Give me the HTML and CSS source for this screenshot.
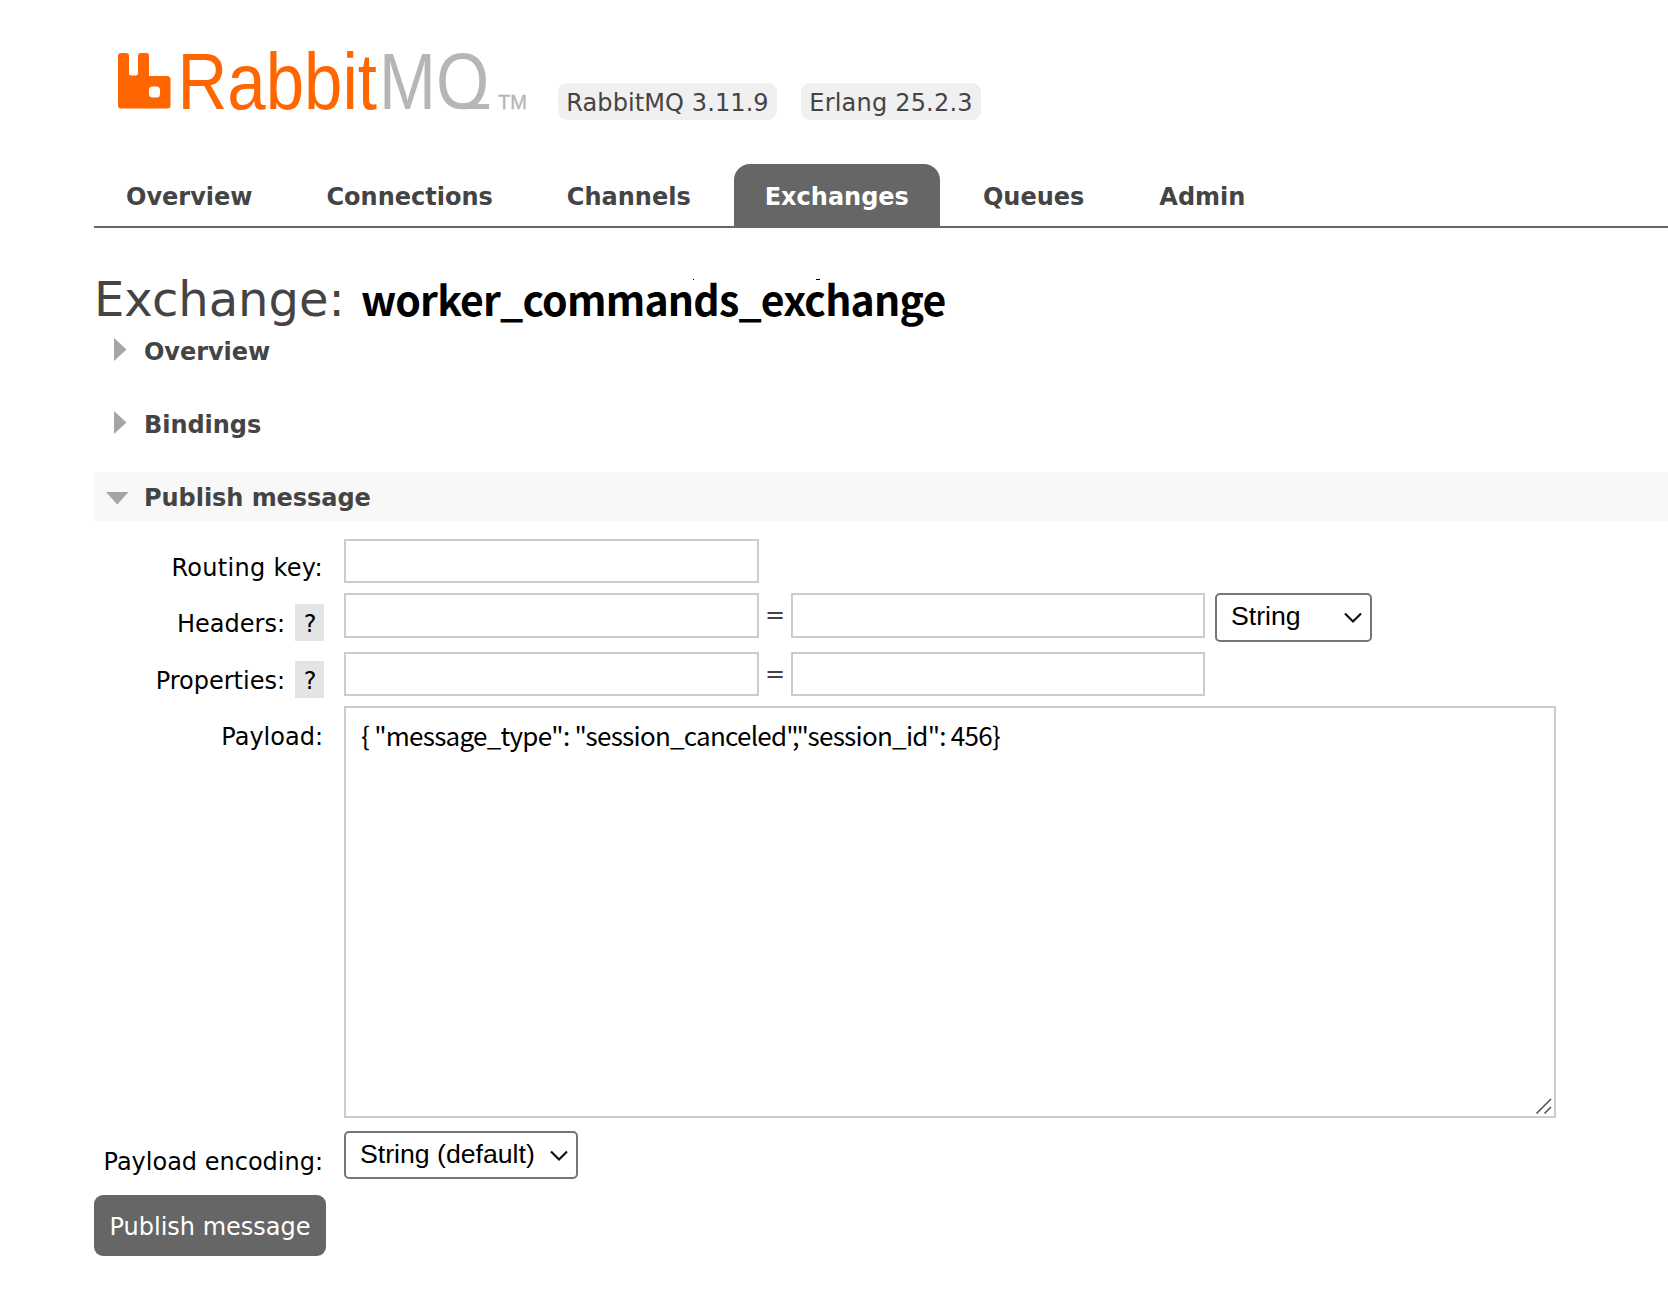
FILE: index.html
```html
<!DOCTYPE html>
<html lang="en">
<head>
<meta charset="utf-8">
<title>RabbitMQ Management</title>
<link rel="stylesheet" href="styles.css">
</head>
<body>
<header class="header">
  <svg class="logo" width="420" height="66" viewBox="0 0 420 66" role="img" aria-label="RabbitMQ">
    <clipPath id="baseline"><path d="M255 0h120v61.300h-120z"/></clipPath>
    <path class="logo-mark" fill-rule="evenodd" d="M4 5h4q3 0 3 3v17q0 2.500 2.500 2.500h4q2.500 0 2.500-2.500V8q0-3 3-3h5q3 0 3 3v20h18q3.500 0 3.500 3.500v26q0 3-3 3H3q-3 0-3-3V8q0-3 3-3zM34.500 38.500q-3.500 0-3.500 3.500v4q0 3.500 3.500 3.500h4q3.500 0 3.500-3.500v-4q0-3.500-3.500-3.500z"/>
    <text class="logo-name" x="59.500" y="60.500" textLength="199.500" lengthAdjust="spacingAndGlyphs">Rabbit</text>
    <g clip-path="url(#baseline)"><text class="logo-name logo-mq" x="261" y="60.500" textLength="110" lengthAdjust="spacingAndGlyphs">MQ</text></g>
    <path class="logo-mq" d="M348 56h23v5h-23z"/>
    <text class="logo-tm" x="380" y="60.500" textLength="29" lengthAdjust="spacingAndGlyphs">TM</text>
  </svg>
  <span class="badge badge-server">RabbitMQ 3.11.9</span>
  <span class="badge badge-erlang">Erlang 25.2.3</span>
</header>
<nav class="tabs">
  <a class="tab">Overview</a>
  <a class="tab">Connections</a>
  <a class="tab">Channels</a>
  <a class="tab tab-active">Exchanges</a>
  <a class="tab">Queues</a>
  <a class="tab">Admin</a>
</nav>
<main class="main">
  <h1 class="title"><span class="title-kind">Exchange:</span><b class="title-name">worker_commands_exchange</b><i class="speck speck-a"></i><i class="speck speck-b"></i></h1>
  <h2 class="section"><svg class="arrow" width="24" height="24" viewBox="0 0 24 24"><path d="M8 0v23l12.500-11.500z"/></svg>Overview</h2>
  <h2 class="section"><svg class="arrow" width="24" height="24" viewBox="0 0 24 24"><path d="M8 0v23l12.500-11.500z"/></svg>Bindings</h2>
  <h2 class="section section-open"><svg class="arrow" width="24" height="24" viewBox="0 0 24 24"><path d="M0 8h22.500L11.250 20.500z"/></svg>Publish message</h2>
  <form class="form">
    <div class="row row-key"><label class="label">Routing key:</label><input class="field"></div>
    <div class="row row-headers"><label class="label">Headers:<span class="help">?</span></label><input class="field"><span class="equals">=</span><input class="field"><div class="select select-type"><span>String</span><svg class="chevron" width="20" height="14" viewBox="0 0 20 14"><path d="M2 2.500l8 8 8-8"/></svg></div></div>
    <div class="row row-props"><label class="label">Properties:<span class="help">?</span></label><input class="field"><span class="equals">=</span><input class="field"></div>
    <div class="row row-payload"><label class="label">Payload:</label><div class="payload"><span class="json">{ "message_type": "session_canceled<span class="tight">",</span>"session_id": 456}</span><svg class="grip" width="18" height="18" viewBox="0 0 18 18"><path d="M1.500 16.500L16 2M9.500 16.500L16 10"/></svg></div></div>
    <div class="row row-encoding"><label class="label">Payload encoding:</label><div class="select select-encoding"><span>String (default)</span><svg class="chevron" width="20" height="14" viewBox="0 0 20 14"><path d="M2 2.500l8 8 8-8"/></svg></div></div>
    <button class="submit" type="button">Publish message</button>
  </form>
</main>
</body>
</html>
```
FILE: styles.css
```css
* { box-sizing: border-box; }
body {
  margin: 0;
  padding-left: 94px;
  height: 1296px;
  overflow: hidden;
  background: #fff;
  color: #444;
  font: 24px/28px Verdana, "DejaVu Sans", sans-serif;
}
.header { display: flex; align-items: flex-start; height: 164px; padding: 48px 0 0 24px; }
.logo { flex: none; margin-right: 20px; overflow: visible; }
.logo-mark { fill: #f60; }
.logo-name { font: 80px "Liberation Sans", Arial, sans-serif; fill: #f60; }
.logo-mq { fill: #b6b6b6; }
.logo-tm { font: 21px "Liberation Sans", Arial, sans-serif; fill: #b6b6b6; stroke: #b6b6b6; stroke-width: .4px; }
.badge { height: 37px; margin-top: 35px; border-radius: 9px; background: #f0f0f0; line-height: 41px; letter-spacing: .1px; text-align: center; white-space: nowrap; }
.badge-server { width: 219px; margin-right: 24px; }
.badge-erlang { width: 180px; letter-spacing: .2px; }
.tabs { display: flex; gap: 12px; height: 64px; border-bottom: 2px solid #666; }
.tab { height: 62px; padding: 0 31px; border-radius: 16px 16px 0 0; font-weight: bold; line-height: 67px; white-space: nowrap; }
.tab:first-child { padding-left: 32px; }
.tab-active { background: #666; color: #fff; }
.tab:last-child { padding-left: 32px; }
.title { position: relative; display: flex; align-items: baseline; height: 98px; margin: 0; padding: 36px 0 0; font-weight: normal; line-height: 70px; white-space: nowrap; }
.title-kind { width: 267px; font-size: 48px; line-height: 70px; }
.title-name { color: #000; font: bold 41px/50px "Noto Sans CJK SC", sans-serif; letter-spacing: -.8px; }
.speck { position: absolute; top: 51px; width: 1px; height: 1px; background: #000; }
.speck-a { left: 599px; }
.speck-b { left: 722px; width: 4px; }
.section { display: flex; height: 49px; margin: 0 0 24px; padding-left: 12px; font-size: 24px; line-height: 53px; letter-spacing: -.05px; }
.section-open { margin: 0; background: #f8f8f8; }
.arrow { flex: none; margin: 12px 14px 0 0; fill: #a5a5a5; }
.form { padding-top: 18px; }
.row { display: flex; color: #000; }
.row-key { height: 54px; }
.row-headers { height: 59px; }
.row-props { height: 54px; }
.row-payload { height: 425px; }
.row-encoding { height: 64px; }
.label { display: flex; justify-content: flex-end; width: 230px; margin-right: 20px; padding: 0 1px 0 0; line-height: 59px; white-space: nowrap; }
.row-key .label { letter-spacing: .3px; }
.row-headers .label { line-height: 63px; }
.row-payload .label { line-height: 63px; }
.row-encoding .label { line-height: 63px; }
.help { width: 29px; height: 37px; margin: 11px -1px 0 10px; padding-left: 1px; background: #e4e4e4; line-height: 41px; text-align: center; }
.row-props .help { margin-top: 9px; }
.field { width: 415px; height: 44px; margin: 0; padding: 0 12px; border: 2px solid #ccc; background: #fff; font-size: 24px; }
.row-headers .field { height: 45px; }
.equals { width: 32px; color: #444; line-height: 45px; text-align: center; }
.equals + .field { width: 414px; }
.select { display: flex; height: 49px; padding-left: 14px; border: 2px solid #767676; border-radius: 5px; background: #fff; font: 26.670px/43px "Liberation Sans", Arial, sans-serif; white-space: nowrap; }
.select-type { width: 157px; margin-left: 10px; }
.select-encoding { width: 234px; height: 48px; }
.chevron { margin: 16px 7px 0 auto; fill: none; stroke: #111; stroke-width: 2.200px; }
.payload { position: relative; width: 1212px; height: 412px; padding: 0 15px; border: 2px solid #ccc; }
.json { font: 26px/54px "Noto Sans CJK SC", sans-serif; letter-spacing: -.74px; white-space: pre; }
.tight { letter-spacing: -3px; }
.grip { position: absolute; right: 1px; bottom: 1px; fill: none; stroke: #555; stroke-width: 1.600px; }
.submit { display: block; width: 232px; height: 61px; padding: 2px 0 0; border: 0; border-radius: 9px; background: #666; color: #fff; font: inherit; white-space: nowrap; }
```
